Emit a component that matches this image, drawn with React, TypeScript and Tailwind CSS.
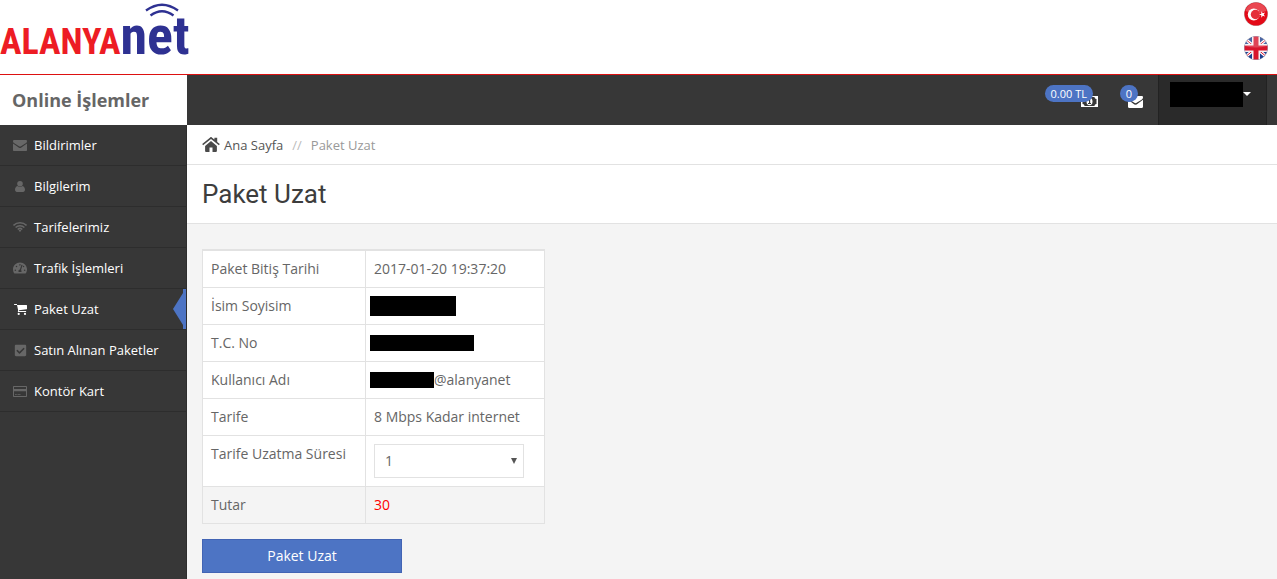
import { useState } from 'react'
import type { ReactNode } from 'react'
import { FaCheckSquare, FaTachometerAlt } from 'react-icons/fa'

function EnvelopeIcon({ className = '' }: { className?: string }) {
  return (
    <svg viewBox="0 0 14 11" fill="currentColor" className={className}>
      <path d="M0 1.2C0 .5.5 0 1.2 0h11.6c.7 0 1.2.5 1.2 1.2 0 .9-.7 1.6-1.3 2.1L8.4 6C8 6.300 7.500 6.600 7 6.600s-1-.3-1.400-.6L1.300 3.300C.7 2.800 0 2.100 0 1.200z" />
      <path d="M0 3.500l5 3.600c.6.5 1.300.9 2 .9s1.400-.4 2-.9l5-3.600V10c0 .6-.4 1-1 1H1c-.6 0-1-.4-1-1z" />
    </svg>
  )
}

function UserIcon() {
  return (
    <svg viewBox="0 0 10 11" fill="currentColor" className="w-[10px] h-[11px]">
      <circle cx="5" cy="2.800" r="2.800" />
      <path d="M2.500 4.900C.8 5.200 0 7 0 8.800 0 10 .8 11 1.900 11h6.200C9.200 11 10 10 10 8.800 10 7 9.200 5.200 7.500 4.900 6.800 5.600 6 6 5 6s-1.800-.4-2.500-1.100z" />
    </svg>
  )
}

function WifiIcon() {
  return (
    <svg viewBox="0 0 14 10" fill="none" stroke="currentColor" strokeWidth="1.500" className="w-[14px] h-[10px]">
      <path d="M.5 3.400a9.300 9.300 0 0 1 13 0M2.600 5.500a6.300 6.300 0 0 1 8.800 0M4.700 7.500a3.300 3.300 0 0 1 4.600 0" />
      <path d="M5.600 8.500L7 10l1.400-1.500a1.900 1.900 0 0 0-2.800 0z" fill="currentColor" stroke="none" />
    </svg>
  )
}

function CartIcon() {
  return (
    <svg viewBox="0 0 13 11" fill="currentColor" className="w-[13px] h-[11px]">
      <path d="M0 .4C0 .2.200 0 .4 0h2c.5 0 .6.500.7.900h9.400c.3 0 .5.200.5.500v3.500c0 .2-.2.400-.4.400l-7.600.9.100.8h6.600c.3 0 .5.200.5.400s-.2.500-.5.500H4.300c-.3 0-.5-.2-.5-.5 0-.2.300-.7.400-.9L3 .900H.4C.2.900 0 .7 0 .4z" />
      <circle cx="4.700" cy="9.900" r="1.100" />
      <circle cx="11" cy="9.900" r="1.100" />
    </svg>
  )
}

function CardIcon() {
  return (
    <svg viewBox="0 0 14 11" fill="currentColor" className="w-[14px] h-[11px]">
      <path fillRule="evenodd" d="M1 0h12c.6 0 1 .4 1 1v9c0 .6-.4 1-1 1H1c-.6 0-1-.4-1-1V1c0-.6.400-1 1-1zM1 1v2h12V1zM1 5.300V10h12V5.300z" />
      <path d="M2 8.200h1.800V9H2zM4.500 8.200h3V9h-3z" />
    </svg>
  )
}

function HomeIcon() {
  return (
    <svg viewBox="0 0 18 15" fill="#4a4a4a" className="w-[18px] h-[15px]">
      <path d="M9 3.900l5.900 5V14c0 .5-.4.900-.9.900h-3.500v-4.300h-3v4.300H4c-.5 0-.9-.4-.9-.9V8.900z" />
      <path d="M8.200.4c.5-.4 1.100-.4 1.600 0l2.600 2.200V.7h2.800v4.200l2.600 2.200-.9 1.100L9 1.900 1.100 8.200l-.9-1.100z" />
    </svg>
  )
}

function MoneyIcon() {
  return (
    <svg viewBox="0 0 17 11" className="w-[17px] h-[11px]">
      <path fill="#fff" d="M0 0h17v11H0z" />
      <path fill="#373737" d="M3.500 1h10c0 1.200.8 2 2 2v5c-1.200 0-2 .8-2 2h-10c0-1.200-.8-2-2-2V3c1.200 0 2-.8 2-2z" />
      <ellipse cx="8.500" cy="5.500" rx="3" ry="3.800" fill="#fff" />
      <path fill="#373737" d="M8 3h1.200v4h.8v1H7V7h1V4.300H7z" />
    </svg>
  )
}

function Logo() {
  return (
    <a href="#" aria-label="Alanyanet" className="relative flex items-baseline h-[74px] font-bold leading-[72px] font-['Roboto_Condensed','Roboto',sans-serif]">
      <span className="text-4xl text-[#ed1c24] font-['Liberation_Sans_Narrow','Roboto_Condensed','Roboto',sans-serif]">ALANYA</span>
      <span className="text-[54px] text-[#2e3192] font-['Liberation_Sans_Narrow','Roboto_Condensed','Roboto',sans-serif]">net</span>
      <svg viewBox="0 0 36 14" fill="none" stroke="#2e3192" strokeWidth="2.400" className="absolute left-[144px] top-[3px] w-[36px] h-[14px]">
        <path d="M2 7.500Q18-4 34 7.500" />
        <path d="M6.500 12.500Q18 4 29.500 12.500" />
      </svg>
    </a>
  )
}

function TurkishFlag() {
  return (
    <svg viewBox="0 0 24 24" className="w-6 h-6">
      <circle cx="12" cy="12" r="12" fill="#b9aeb0" />
      <circle cx="12" cy="12" r="11.500" fill="#e30a17" />
      <path d="M1.500 9a10.800 10.800 0 0 1 21 0Q12 13 1.500 9z" fill="#fff" opacity=".25" />
      <circle cx="9.800" cy="12.500" r="6" fill="#fff" />
      <circle cx="11.500" cy="12.500" r="4.700" fill="#e5303a" />
      <path d="M15 12.500l2.300-.8V9.300l1.500 2 2.300-.8-1.400 2 1.400 2-2.300-.8-1.500 2v-2.400z" fill="#fff" />
    </svg>
  )
}

function BritishFlag() {
  return (
    <svg viewBox="0 0 24 24" className="w-6 h-6">
      <clipPath id="uk">
        <circle cx="12" cy="12" r="11.500" />
      </clipPath>
      <circle cx="12" cy="12" r="12" fill="#a8a8b4" />
      <g clipPath="url(#uk)">
        <path fill="#1d3f8f" d="M0 0h24v24H0z" />
        <path stroke="#fff" strokeWidth="3" d="M0 2l24 20M24 2L0 22" />
        <path stroke="#d8142c" strokeWidth="1" d="M0 2l24 20M24 2L0 22" />
        <path stroke="#f4f0f2" strokeWidth="8" d="M12 0v24M0 12h24" />
        <path stroke="#d8142c" strokeWidth="5" d="M12 0v24M0 12h24" />
        <path d="M1 10a11 11 0 0 1 22 0Q12 13 1 10z" fill="#fff" opacity=".2" />
      </g>
    </svg>
  )
}

const menu = [
  { label: 'Bildirimler', icon: <EnvelopeIcon className="w-[14px] h-[11px]" /> },
  { label: 'Bilgilerim', icon: <UserIcon /> },
  { label: 'Tarifelerimiz', icon: <WifiIcon /> },
  { label: 'Trafik İşlemleri', icon: <FaTachometerAlt className="size-[14px]" /> },
  { label: 'Paket Uzat', icon: <CartIcon />, active: true },
  { label: 'Satın Alınan Paketler', icon: <FaCheckSquare className="size-[13px]" /> },
  { label: 'Kontör Kart', icon: <CardIcon /> },
]

function Row({ label, children }: { label: ReactNode; children: ReactNode }) {
  return (
    <tr className="last:bg-[#f4f4f4]">
      <th scope="row" className="w-[163px] p-2 font-normal text-left align-top border border-[#e2e2e2]">
        {label}
      </th>
      <td className="p-2 align-top border border-[#e2e2e2]">{children}</td>
    </tr>
  )
}

function App() {
  const [months, setMonths] = useState(1)

  return (
    <div className="flex flex-col min-h-screen bg-white text-[#666] font-['Open_Sans',sans-serif] text-[13px] leading-5">
      <header className="flex justify-between h-[75px] border-b border-[#dd1111]">
        <Logo />
        <div className="flex flex-col gap-[10px] pt-[2px] pr-[9px]">
          <button aria-label="Türkçe">
            <TurkishFlag />
          </button>
          <button aria-label="English">
            <BritishFlag />
          </button>
        </div>
      </header>

      <div className="flex flex-1">
        {/* Sidebar */}
        <aside className="w-[187px] shrink-0 bg-[#373737] border-r border-[#2e2e2e]">
          <div className="flex items-center h-[50px] -mr-px pl-3 bg-white text-lg font-bold">Online İşlemler</div>
          <nav>
            {menu.map((item) => (
              <a
                key={item.label}
                href="#"
                className="relative flex items-center h-[41px] pl-[13px] text-white border-b border-[#2d2d2d]"
              >
                <span className={`flex justify-center w-[14px] mr-[7px] ${item.active ? 'text-white' : 'text-[#676767]'}`}>
                  {item.icon}
                </span>
                {item.label}
                {item.active && (
                  <svg viewBox="0 0 13 40" className="absolute top-0 right-0 w-[13px] h-10">
                    <path d="M0 20L10 4V0h3v40h-3v-4z" fill="#4d74c4" />
                  </svg>
                )}
              </a>
            ))}
          </nav>
        </aside>

        <div className="flex flex-col flex-1 min-w-0">
          {/* Top bar */}
          <div className="flex justify-end h-[50px] pr-[10px] bg-[#373737]">
            <button aria-label="Bakiye" className="relative flex justify-center w-[46px] pt-[21px]">
              <MoneyIcon />
              <span className="absolute top-[10px] right-[19px] px-[6px] rounded-full bg-[#4d74c4] text-white text-[11px] leading-[17px] whitespace-nowrap">
                0.00 TL
              </span>
            </button>
            <button aria-label="Mesajlar" className="relative flex justify-center w-[46px] pt-[21px]">
              <EnvelopeIcon className="w-[15px] h-[12px] text-white" />
              <span className="absolute top-[10px] right-[20px] px-[6px] rounded-full bg-[#4d74c4] text-white text-[11px] leading-[17px]">
                0
              </span>
            </button>
            <button
              aria-label="Hesap"
              className="flex items-start h-full w-[109px] pt-[7px] pl-[11px] bg-[#2a2a2a] border-x border-[#222]"
            >
              <span className="w-[73px] h-[25px] bg-black" />
              <svg viewBox="0 0 8 4" fill="#fff" className="w-2 h-1 mt-[10px]">
                <path d="M0 0h8L4 4z" />
              </svg>
            </button>
          </div>

          {/* Breadcrumb */}
          <nav className="flex items-center h-10 px-[15px] border-b border-[#e2e2e2]">
            <a href="#" className="flex items-center gap-1 text-[#555]">
              <HomeIcon />
              Ana Sayfa
            </a>
            <span className="mx-[9px] text-[#bbb]">//</span>
            <span className="text-[#999]">Paket Uzat</span>
          </nav>

          <h1 className="flex items-center h-[59px] px-[15px] border-b border-[#e2e2e2] text-[#3d3d3d] text-[26px] font-['Roboto',sans-serif]">
            Paket Uzat
          </h1>

          <main className="flex-1 px-[15px] pt-[25px] pb-[6px] bg-[#f4f4f4] text-sm">
            <table className="w-[343px] bg-white border-collapse border border-t-2 border-[#e2e2e2]">
              <tbody>
                <Row label="Paket Bitiş Tarihi">2017-01-20 19:37:20</Row>
                <Row label="İsim Soyisim">
                  <div className="w-[86px] h-5 -ml-1 bg-black" />
                </Row>
                <Row label="T.C. No">
                  <div className="w-[104px] h-4 my-[2px] -ml-1 bg-black" />
                </Row>
                <Row label="Kullanıcı Adı">
                  <div className="flex items-center -ml-1">
                    <span className="w-[64px] h-4 bg-black" />
                    @alanyanet
                  </div>
                </Row>
                <Row label="Tarife">8 Mbps Kadar internet</Row>
                <Row label={<label htmlFor="months">Tarife Uzatma Süresi</label>}>
                  <div className="relative w-[150px]">
                    <select
                      id="months"
                      value={months}
                      onChange={(e) => setMonths(Number(e.target.value))}
                      className="block w-full h-[34px] px-[10px] appearance-none bg-white border border-[#e2e2e2]"
                    >
                      {[1, 2, 3, 6, 12].map((m) => (
                        <option key={m} value={m}>
                          {m}
                        </option>
                      ))}
                    </select>
                    <svg viewBox="0 0 6 6" fill="#555" className="absolute right-[7px] top-[14px] size-[6px] pointer-events-none">
                      <path d="M0 0h6L3 6z" />
                    </svg>
                  </div>
                </Row>
                <Row label="Tutar">
                  <span className="text-[#f00]">{months * 30}</span>
                </Row>
              </tbody>
            </table>
            <button className="w-[200px] h-[34px] mt-[15px] bg-[#4d74c4] border border-[#4264b4] text-white">
              Paket Uzat
            </button>
          </main>
        </div>
      </div>
    </div>
  )
}

export default App
